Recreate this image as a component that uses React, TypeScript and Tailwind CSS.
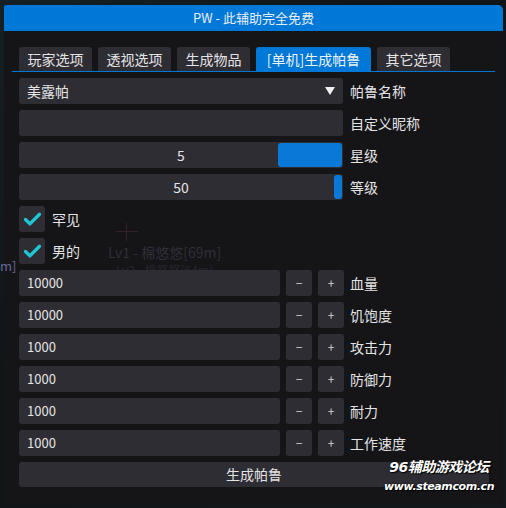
import { Check } from "lucide-react";

const tabs = [
  { label: "玩家选项", w: "w-[73px]" },
  { label: "透视选项", w: "w-[73px]" },
  { label: "生成物品", w: "w-[73px]" },
  { label: "[单机]生成帕鲁", w: "w-[115px]", active: true },
  { label: "其它选项", w: "w-[73px]" },
];

const stats = [
  { value: "10000", label: "血量" },
  { value: "10000", label: "饥饱度" },
  { value: "1000", label: "攻击力" },
  { value: "1000", label: "防御力" },
  { value: "1000", label: "耐力" },
  { value: "1000", label: "工作速度" },
];

const frame = "bg-[#2e2d33] rounded-[3px]";

const App = () => {
  return (
    <div className="relative w-[506px] h-[508px] overflow-hidden bg-[#111619] font-['Noto_Sans_CJK_SC',sans-serif] text-[14px] text-[#e4e4e6]">
      <div className="absolute inset-0 bg-[linear-gradient(135deg,#142025_0%,#101417_40%,#12191c_100%)]" />

      {/* Main window */}
      <div className="relative ml-[4px] mt-[5px] w-[499px] h-[500px] bg-[#151518] rounded-tr-[5px] rounded-tl-[2px] flex flex-col">
        {/* Title bar */}
        <div className="h-[26px] bg-[#0078d7] rounded-tr-[5px] rounded-tl-[2px] flex items-center justify-center text-[13px] text-[#e8eef6]">
          PW - 此辅助完全免费
        </div>

        {/* Faint world text behind the translucent window */}
        <div className="absolute left-[104px] top-[240px] h-[15px] text-[14px] text-[#2f2f38] leading-[15px]">
          Lv1 - 棉悠悠[69m]
        </div>
        <div className="absolute left-[112px] top-[259px] h-[12px] text-[12px] text-[#25252d] leading-[12px]">
          Lv2 - 棉悠悠[64m]
        </div>
        <div className="absolute left-[112px] top-[226px] w-[22px] h-[1px] bg-[#35202a]" />
        <div className="absolute left-[122px] top-[218px] w-[1px] h-[18px] bg-[#35202a]" />

        {/* Tabs */}
        <div className="mt-[16px] mx-[8px] border-b border-[#0078d7] flex gap-[6px] pl-[7px]">
          {tabs.map((t) => (
            <div
              key={t.label}
              className={`${t.w} h-[24px] flex items-center justify-center rounded-t-[3px] leading-none ${
                t.active ? "bg-[#0078d7] text-[#eef3fa]" : "bg-[#2e2d33]"
              }`}
            >
              {t.label}
            </div>
          ))}
        </div>

        {/* Content */}
        <div className="relative px-[15px] pt-[6px] flex flex-col gap-[6px]">
          {/* Combo */}
          <div className="flex items-center">
            <div className={`${frame} w-[324px] h-[26px] flex items-center justify-between px-[8px]`}>
              <span>美露帕</span>
              <svg width="10" height="8" viewBox="0 0 10 8">
                <polygon points="0,0 10,0 5,8" fill="#f0f0f0" />
              </svg>
            </div>
            <span className="ml-[7px]">帕鲁名称</span>
          </div>

          {/* Nickname */}
          <div className="flex items-center">
            <div className={`${frame} w-[324px] h-[26px]`} />
            <span className="ml-[7px]">自定义昵称</span>
          </div>

          {/* Star slider */}
          <div className="flex items-center">
            <div className={`${frame} relative w-[324px] h-[26px] flex items-center justify-center`}>
              <span className="relative">5</span>
              <div className="absolute right-[1px] top-[1px] bottom-[1px] w-[64px] bg-[#0a78d7] rounded-[3px]" />
            </div>
            <span className="ml-[7px]">星级</span>
          </div>

          {/* Level slider */}
          <div className="flex items-center">
            <div className={`${frame} relative w-[324px] h-[26px] flex items-center justify-center`}>
              <span className="relative">50</span>
              <div className="absolute right-[1px] top-[1px] bottom-[1px] w-[8px] bg-[#0a78d7] rounded-[3px]" />
            </div>
            <span className="ml-[7px]">等级</span>
          </div>

          {/* Checkboxes */}
          {["罕见", "男的"].map((c) => (
            <div key={c} className="flex items-center">
              <div className={`${frame} w-[26px] h-[26px] flex items-center justify-center`}>
                <Check className="w-[21px] h-[21px] text-[#1fc6d6]" strokeWidth={3.8} />
              </div>
              <span className="ml-[7px]">{c}</span>
            </div>
          ))}

          {/* Stat inputs */}
          {stats.map((s) => (
            <div key={s.label} className="flex items-center">
              <div className={`${frame} w-[261px] h-[26px] flex items-center px-[8px] text-[13px]`}>
                {s.value}
              </div>
              <div className={`${frame} ml-[6px] w-[26px] h-[26px] flex items-center justify-center text-[12px] text-[#cfcfd2]`}>
                −
              </div>
              <div className={`${frame} ml-[6px] w-[26px] h-[26px] flex items-center justify-center text-[12px] text-[#cfcfd2]`}>
                +
              </div>
              <span className="ml-[6px]">{s.label}</span>
            </div>
          ))}

          {/* Generate button */}
          <div className={`${frame} w-[470px] h-[25px] flex items-center justify-center`}>
            生成帕鲁
          </div>
        </div>
      </div>

      <div className="absolute left-0 top-[259px] text-[13px] text-[#6a6a9a] leading-none">m]</div>

      {/* Watermark */}
      <div className="absolute left-[379px] top-[458px] w-[120px] flex flex-col items-center font-['DejaVu_Sans','Noto_Sans_CJK_SC',sans-serif] font-bold italic text-white [text-shadow:0_0_2px_#000,1px_1px_1px_#000]">
        <span className="text-[14px] leading-[19px] tracking-[-0.5px]">96辅助游戏论坛</span>
        <span className="text-[11px] leading-[20px] tracking-[-0.4px]">www.steamcom.cn</span>
      </div>
    </div>
  );
};

export default App;
